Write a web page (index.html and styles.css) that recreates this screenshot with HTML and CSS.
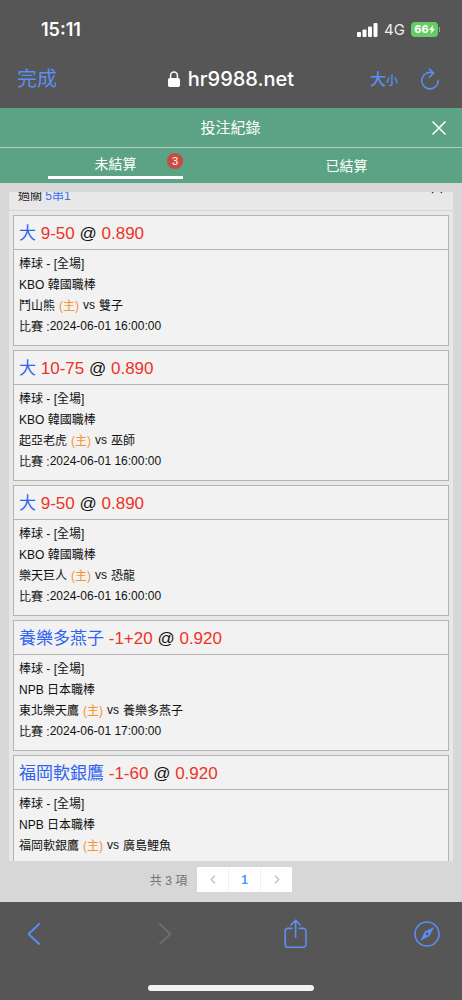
FILE: index.html
```html
<!DOCTYPE html>
<html lang="zh-Hant">
<head>
<meta charset="utf-8">
<meta name="viewport" content="width=device-width, initial-scale=1">
<title>投注紀錄</title>
<link rel="stylesheet" href="styles.css">
</head>
<body>
<div class="screen">
  <div class="status">
    <span class="clock">15:11</span>
    <div class="status-right">
      <svg class="signal" width="21" height="14" viewBox="0 0 21 14" fill="#fff" aria-hidden="true"><rect x="0" y="9" width="4" height="5" rx="1"/><rect x="5.5" y="6.5" width="4" height="7.5" rx="1"/><rect x="11" y="3.5" width="4" height="10.5" rx="1"/><rect x="16.5" y="0" width="4" height="14" rx="1"/></svg>
      <span class="network">4G</span>
      <span class="battery"><span class="level">66</span><svg width="6" height="9" viewBox="0 0 6 9" fill="#fff" aria-hidden="true"><path d="M4.2 0 0 5h2.5L1.7 9 6 3.8H3.4z"/></svg></span>
    </div>
  </div>
  <div class="browser-bar">
    <button class="done" type="button">完成</button>
    <div class="address">
      <svg width="12" height="16" viewBox="0 0 12 16" aria-hidden="true"><rect x="0" y="7" width="12" height="9" rx="1.8" fill="#fff"/><path d="M2.6 7.5V4.4a3.4 3.4 0 0 1 6.8 0v3.1" fill="none" stroke="#fff" stroke-width="1.5"/></svg>
      <span>hr9988.net</span>
    </div>
    <div class="browser-actions">
      <button class="text-size" type="button">大<small>小</small></button>
      <button type="button" aria-label="重新載入"><svg width="20" height="22" viewBox="0 0 20 22" fill="none" stroke="#5b8ff2" stroke-width="1.6" stroke-linecap="round" stroke-linejoin="round"><path d="M13 5A8.2 8.2 0 1 0 18.2 12.4"/><path d="m9.4 1 4.2 4.1-4.2 4.2"/></svg></button>
    </div>
  </div>

  <header class="title-bar">
    <h1>投注紀錄</h1>
    <button class="close" type="button" aria-label="關閉"><svg width="16" height="16" viewBox="0 0 16 16" stroke="#fff" stroke-width="1.6"><path d="m1.5 1.5 13 13m0-13-13 13"/></svg></button>
  </header>
  <nav class="tabs">
    <button class="tab" type="button"><span class="tab-label active">未結算<span class="badge">3</span></span></button>
    <button class="tab" type="button"><span class="tab-label">已結算</span></button>
  </nav>

  <main class="panel">
    <div class="scroller">
      <section class="group">
        <div class="group-head"><span>過關 <b>5串1</b></span><svg width="12" height="8" viewBox="0 0 12 8" fill="none" stroke="#333" stroke-width="1.2" aria-hidden="true"><path d="m1 7 5-5 5 5"/></svg></div>
        <article class="bet">
          <h2><span class="pick">大</span> <span class="odds">9-50</span> <span class="at">@</span> <span class="odds">0.890</span></h2>
          <div class="detail"><p>棒球 - [全場]</p><p>KBO 韓國職棒</p><p class="match">鬥山熊 <em>(主)</em> <i>vs</i> <span>雙子</span></p><p class="date">比賽 :<time>2024-06-01 16:00:00</time></p></div>
        </article>
        <article class="bet">
          <h2><span class="pick">大</span> <span class="odds">10-75</span> <span class="at">@</span> <span class="odds">0.890</span></h2>
          <div class="detail"><p>棒球 - [全場]</p><p>KBO 韓國職棒</p><p class="match">起亞老虎 <em>(主)</em> <i>vs</i> <span>巫師</span></p><p class="date">比賽 :<time>2024-06-01 16:00:00</time></p></div>
        </article>
        <article class="bet">
          <h2><span class="pick">大</span> <span class="odds">9-50</span> <span class="at">@</span> <span class="odds">0.890</span></h2>
          <div class="detail"><p>棒球 - [全場]</p><p>KBO 韓國職棒</p><p class="match">樂天巨人 <em>(主)</em> <i>vs</i> <span>恐龍</span></p><p class="date">比賽 :<time>2024-06-01 16:00:00</time></p></div>
        </article>
        <article class="bet">
          <h2><span class="pick">養樂多燕子</span> <span class="odds">-1+20</span> <span class="at">@</span> <span class="odds">0.920</span></h2>
          <div class="detail"><p>棒球 - [全場]</p><p>NPB 日本職棒</p><p class="match">東北樂天鷹 <em>(主)</em> <i>vs</i> <span>養樂多燕子</span></p><p class="date">比賽 :<time>2024-06-01 17:00:00</time></p></div>
        </article>
        <article class="bet">
          <h2><span class="pick">福岡軟銀鷹</span> <span class="odds">-1-60</span> <span class="at">@</span> <span class="odds">0.920</span></h2>
          <div class="detail"><p>棒球 - [全場]</p><p>NPB 日本職棒</p><p class="match">福岡軟銀鷹 <em>(主)</em> <i>vs</i> <span>廣島鯉魚</span></p></div>
        </article>
      </section>
    </div>
    <div class="pager">
      <span class="total">共 3 項</span>
      <div class="pages">
        <button type="button" aria-label="上一頁"><svg width="6" height="9" viewBox="0 0 6 9" fill="none" stroke="#b9bdc5" stroke-width="1.2"><path d="M5 .8 1.2 4.5 5 8.2"/></svg></button>
        <button class="current" type="button">1</button>
        <button type="button" aria-label="下一頁"><svg width="6" height="9" viewBox="0 0 6 9" fill="none" stroke="#b9bdc5" stroke-width="1.2"><path d="m1 .8 3.8 3.7L1 8.2"/></svg></button>
      </div>
    </div>
  </main>

  <footer class="toolbar">
    <div class="tools">
      <button type="button" aria-label="返回"><svg width="14" height="22" viewBox="0 0 14 22" fill="none" stroke="#5b8ff2" stroke-width="1.8" stroke-linecap="round" stroke-linejoin="round"><path d="M12.2 1 1.5 11l10.7 10"/></svg></button>
      <button type="button" aria-label="前進"><svg width="14" height="22" viewBox="0 0 14 22" fill="none" stroke="#6d6d6d" stroke-width="1.8" stroke-linecap="round" stroke-linejoin="round"><path d="m1.8 1 10.7 10L1.8 21"/></svg></button>
      <button type="button" aria-label="分享"><svg width="24" height="30" viewBox="0 0 24 30" fill="none" stroke="#5b8ff2" stroke-width="1.6" stroke-linecap="round" stroke-linejoin="round"><path d="M8 9.4H4a2.8 2.8 0 0 0-2.8 2.8v13.2A2.8 2.8 0 0 0 4 28.2h15.2a2.8 2.8 0 0 0 2.8-2.8V12.2a2.8 2.8 0 0 0-2.8-2.8h-4M11.6 18.3V1.5M7 6l4.6-4.8L16.2 6"/></svg></button>
      <button type="button" aria-label="瀏覽"><svg width="26" height="26" viewBox="0 0 26 26" fill="none" stroke="#5b8ff2" stroke-width="1.6"><circle cx="13" cy="13" r="12"/><path fill="#5b8ff2" fill-rule="evenodd" stroke="none" d="m20 6-4.4 9-9.2 4.8 4.4-9.2zM13.1 11.5a1.4 1.4 0 1 0 0 2.8 1.4 1.4 0 0 0 0-2.8z"/></svg></button>
    </div>
    <div class="home-bar"></div>
  </footer>
</div>
</body>
</html>
```
FILE: styles.css
```css
* { box-sizing: border-box; }
body {
  margin: 0;
  font-family: "Liberation Sans", "Noto Sans CJK TC", sans-serif;
  background: #565656;
}
h1, h2, p { margin: 0; font-weight: 400; }
button {
  margin: 0;
  padding: 0;
  border: 0;
  background: none;
  font: inherit;
  color: inherit;
  cursor: pointer;
}
svg { display: block; }
.screen { display: flex; flex-direction: column; height: 100vh; }

.status {
  display: flex;
  justify-content: space-between;
  align-items: center;
  height: 59px;
  padding: 0 22px 0 41px;
  color: #fff;
  font-family: Inter, sans-serif;
}
.clock { font-size: 18px; font-weight: 600; }
.status-right { display: flex; align-items: center; gap: 6px; }
.network { font-size: 15px; color: #eee; }
.battery {
  position: relative;
  display: flex;
  align-items: center;
  justify-content: center;
  width: 27px;
  height: 15px;
  margin-right: 2px;
  border-radius: 4px;
  background: #65cc66;
}
.battery::after {
  content: "";
  position: absolute;
  right: -2px;
  top: 5px;
  width: 1px;
  height: 5px;
  background: #65cc66;
}
.level { font-size: 11px; font-weight: 700; line-height: 15px; }

.browser-bar {
  display: grid;
  grid-template-columns: 1fr auto 1fr;
  align-items: center;
  height: 49px;
  padding: 0 22px 10px 17px;
  color: #5b8ff2;
}
.done { justify-self: start; font-size: 20px; line-height: 30px; }
.address {
  display: flex;
  align-items: center;
  gap: 8px;
  padding-left: 5px;
  color: #fff;
  font: 500 20px/30px Inter, sans-serif;
}
.browser-actions { display: flex; justify-content: flex-end; align-items: center; gap: 22px; }
.text-size { font-family: "Noto Sans CJK TC", sans-serif; font-size: 16px; font-weight: 500; line-height: 30px; }
.text-size small { font-size: 12px; }

.title-bar {
  display: grid;
  grid-template-columns: 1fr auto 1fr;
  align-items: center;
  height: 40px;
  padding: 0 15px 0 14px;
  border-bottom: 1px solid #b4cfc2;
  background: #5ba384;
  color: #fff;
}
h1 { grid-column: 2; font-size: 15px; line-height: 24px; }
.close { justify-self: end; }
.tabs {
  display: grid;
  grid-template-columns: 1fr 1fr;
  height: 35px;
  background: #5ba384;
  color: #fff;
}
.tab { display: flex; justify-content: center; align-items: center; font-size: 14px; }
.tab-label { position: relative; width: 135px; line-height: 28px; }
.active { border-bottom: 3px solid #fff; line-height: 24px; }
.badge {
  position: absolute;
  top: 1px;
  right: 0;
  width: 16px;
  height: 16px;
  border-radius: 8px;
  background: #c94b41;
  font-size: 11px;
  line-height: 16px;
}

.panel {
  display: flex;
  flex: 1;
  flex-direction: column;
  min-height: 0;
  padding: 9px 9px 0;
  background: #d7d7d7;
}
.scroller { flex: 1; overflow: hidden; background: #e8e8e8; }
.group {
  display: flex;
  flex-direction: column;
  gap: 4px;
  margin-top: -12px;
  padding: 0 4px;
}
.group-head {
  display: flex;
  justify-content: space-between;
  align-items: flex-start;
  height: 31px;
  margin: 0 -4px;
  padding: 6px 10px 0 9px;
  border-bottom: 1px solid #d5d5d5;
  color: #222;
  font-size: 12px;
  line-height: 20px;
}
.group-head b { color: #3f6ff0; font-weight: 400; }
.bet {
  border: 1px solid #b4b4b4;
  background: #f2f2f2;
  color: #111;
}
h2 {
  height: 34px;
  padding: 0 5px;
  border-bottom: 1px solid #b4b4b4;
  font-size: 17px;
  line-height: 36px;
  white-space: nowrap;
}
.pick { color: #2e62f0; }
.odds { color: #ee3226; }
.detail { height: 95px; padding: 4px 5px; font-size: 12px; }
.detail p { height: 21px; line-height: 21px; white-space: nowrap; }
.match { display: flex; gap: 4px; }
.match em { color: #f59432; font-style: normal; }
.match i { font-style: normal; line-height: 18px; }
.date { display: flex; }
.date time { line-height: 18px; }

.pager {
  display: flex;
  justify-content: center;
  align-items: center;
  gap: 10px;
  height: 41px;
  padding: 0 20px 4px 0;
  color: #707379;
  font-size: 12px;
}
.pages { display: flex; gap: 1px; background: #f1f1f1; }
.pages button {
  display: flex;
  justify-content: center;
  align-items: center;
  width: 31px;
  height: 25px;
  background: #fff;
}
.pages .current { color: #459bf8; font-weight: 700; }

.toolbar {
  display: flex;
  flex-direction: column;
  justify-content: space-between;
  align-items: center;
  height: 98px;
  padding: 16px 0 9px;
}
.tools {
  display: flex;
  justify-content: space-between;
  align-items: center;
  width: 100%;
  padding: 0 13px 0 12px;
}
.tools button {
  display: flex;
  justify-content: center;
  align-items: center;
  width: 44px;
  height: 32px;
}
.home-bar { width: 36%; height: 6px; border-radius: 3px; background: #f2f2f2; }
```
